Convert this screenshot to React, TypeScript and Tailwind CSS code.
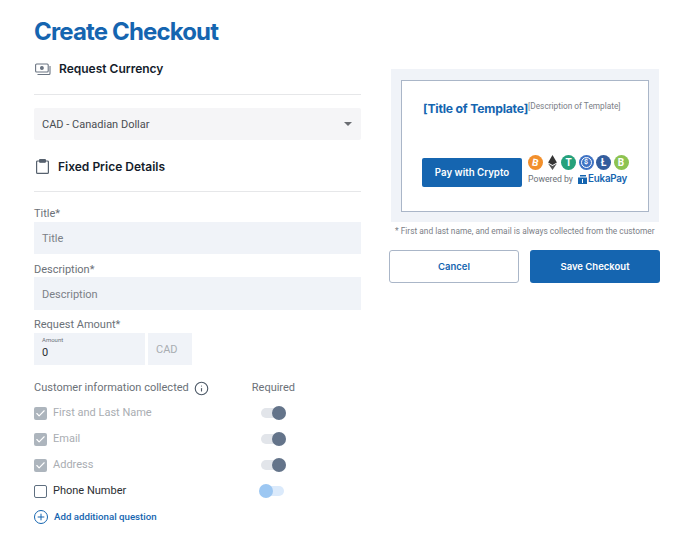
import { Check, Info, Plus } from 'lucide-react'

const heading = 'font-["Inter",sans-serif]'

function Coin({ color, children }: { color: string; children: React.ReactNode }) {
  return (
    <span className={`flex h-[15px] w-[15px] items-center justify-center rounded-full text-[10px] font-bold leading-none text-white ${color}`}>
      {children}
    </span>
  )
}

function InfoRow({ label, checked }: { label: string; checked: boolean }) {
  return (
    <div className="flex h-[26px] items-center">
      <span className={`flex h-[13px] w-[13px] items-center justify-center rounded-[2px] ${checked ? 'bg-[#adb5bd]' : 'border border-[#5f6f80] bg-white'}`}>
        {checked && <Check className="h-[11px] w-[11px] text-white" strokeWidth={2.5} />}
      </span>
      <span className={`ml-[6px] w-[208px] text-[11px] ${checked ? 'text-[#a9adb2]' : 'text-[#2b2f33]'}`}>{label}</span>
      {checked ? (
        <span className="relative h-[10px] w-[25px] rounded-full bg-[#e2e5ea]">
          <span className="absolute -top-[2px] right-0 h-[14px] w-[14px] rounded-full bg-[#64748a]" />
        </span>
      ) : (
        <span className="relative h-[10px] w-[23px] rounded-full bg-[#dbeafb]">
          <span className="absolute -top-[2px] -left-[2px] h-[14px] w-[14px] rounded-full bg-[#9cc7f2]" />
        </span>
      )}
    </div>
  )
}

export default function App() {
  return (
    <div className='flex h-[539px] w-[688px] items-start bg-white pl-[34px] font-["Roboto",sans-serif]'>
      <div className="w-[327px] pt-[16px]">
        <h1 className={`${heading} text-[24px] font-bold leading-[32px] tracking-[-0.85px] text-[#1565b0]`}>Create Checkout</h1>

        <div className="mt-[5px] flex h-[32px] items-center">
          <svg viewBox="0 0 16 13" className="ml-[1px] h-[13px] w-[16px] text-[#6b7582]" fill="none" stroke="currentColor" strokeWidth="1.1">
            <rect x="0.6" y="1" width="12.6" height="8" rx="1" />
            <circle cx="6.9" cy="5" r="1.4" fill="currentColor" />
            <path d="M15 3v7.5a1 1 0 0 1-1 1H2.5" />
          </svg>
          <span className={`${heading} ml-[8px] text-[12px] font-semibold text-[#141c2b]`}>Request Currency</span>
        </div>
        <div className="mt-[9px] h-px bg-[#e6e7e9]" />

        <div className="mt-[13px] flex h-[32px] items-center justify-between rounded-[2px] bg-[#f5f5f7] pl-[8px] pr-[9px]">
          <span className="pt-[2px] text-[11px] text-[#4a4d52]">CAD - Canadian Dollar</span>
          <span className="h-0 w-0 border-x-[4px] border-t-[4px] border-x-transparent border-t-[#6a6d72]" />
        </div>

        <div className="mt-[10px] flex h-[32px] items-center">
          <svg viewBox="0 0 13 15" className="ml-[2px] h-[15px] w-[13px] text-[#56616e]" fill="none" stroke="currentColor" strokeWidth="1.2">
            <path d="M3.5 2H1.6a1 1 0 0 0-1 1v10.4a1 1 0 0 0 1 1h9.8a1 1 0 0 0 1-1V3a1 1 0 0 0-1-1H9.5" />
            <rect x="3.6" y="0.6" width="5.8" height="2.6" rx="0.5" fill="currentColor" />
          </svg>
          <span className={`${heading} ml-[9px] pt-[1px] text-[12px] font-semibold text-[#141c2b]`}>Fixed Price Details</span>
        </div>
        <div className="mt-[9px] h-px bg-[#e6e7e9]" />

        <div className="mt-[14px] text-[11px] leading-[16px] text-[#6b7178]">Title*</div>
        <div className="flex h-[32px] items-center bg-[#f0f3f8] pl-[8px] pt-[2px] text-[11px] text-[#7b8087]">Title</div>

        <div className="mt-[8px] text-[11px] leading-[15px] text-[#6b7178]">Description*</div>
        <div className="flex h-[33px] items-center bg-[#f0f3f8] pl-[8px] pt-[3px] text-[11px] text-[#7b8087]">Description</div>

        <div className="mt-[7px] text-[11px] leading-[16px] text-[#6b7178]">Request Amount*</div>
        <div className="flex gap-[3px]">
          <div className="flex h-[32px] w-[111px] flex-col bg-[#f0f3f8] pl-[8px] pt-[3px]">
            <span className="text-[6px] leading-[8px] text-[#6b7178]">Amount</span>
            <span className="pt-[1px] text-[11px] leading-[15px] text-[#2b2f33]">0</span>
          </div>
          <div className="flex h-[32px] w-[44px] items-center bg-[#f0f3f8] pl-[8px] pt-[2px] text-[11px] text-[#a9adb2]">CAD</div>
        </div>

        <div className="mt-[15px] flex h-[16px] items-center text-[11px] text-[#6b7178]">
          <span>Customer information collected</span>
          <Info className="ml-[5px] h-[15px] w-[15px] text-[#4e5a68]" strokeWidth={1.8} />
          <span className="ml-[43px]">Required</span>
        </div>

        <div className="mt-[4px] flex flex-col">
          <InfoRow label="First and Last Name" checked />
          <InfoRow label="Email" checked />
          <InfoRow label="Address" checked />
          <InfoRow label="Phone Number" checked={false} />
        </div>

        <div className="mt-[6px] flex h-[14px] items-center">
          <span className="flex h-[14px] w-[14px] items-center justify-center rounded-full border-[1.4px] border-[#1565b0]">
            <Plus className="h-[10px] w-[10px] text-[#1565b0]" strokeWidth={2.4} />
          </span>
          <span className="ml-[6px] text-[9.7px] font-medium text-[#1565b0]">Add additional question</span>
        </div>
      </div>

      <div className="ml-[28px] mt-[69px] w-[271px]">
        <div className="ml-[2px] w-[268px] bg-[#f0f3f8] px-[10px] pb-[10px] pt-[11px]">
          <div className="h-[132px] border border-[#aab6c8] bg-white pl-[20px] pt-[18px]">
            <div className="flex items-start">
              <span className={`${heading} ml-[1px] text-[12.2px] font-bold leading-[20px] tracking-[-0.2px] text-[#1565b0]`}>[Title of Template]</span>
              <span className="mt-[1px] text-[8.3px] leading-[12px] text-[#7b8087]">[Description of Template]</span>
            </div>
            <div className="mt-[36px] flex items-start">
              <div className={`${heading} mt-[3px] flex h-[29px] w-[100px] items-center justify-center rounded-[2px] bg-[#1565b0] pt-[2px] text-[9.7px] font-semibold text-white`}>
                Pay with Crypto
              </div>
              <div className="ml-[6px]">
                <div className="flex gap-[2.5px]">
                  <Coin color="bg-[#f28f2b]">
                    <span className="rotate-12">B</span>
                  </Coin>
                  <svg viewBox="0 0 10 15" className="h-[15px] w-[13px]">
                    <path d="M5 0 9.4 7.4 5 10 .6 7.4z" fill="#343434" />
                    <path d="M5 11 9.4 8.4 5 15 .6 8.4z" fill="#555" />
                  </svg>
                  <Coin color="bg-[#26a17b]">T</Coin>
                  <Coin color="bg-[#3f73c4]">
                    <span className="flex h-[11px] w-[11px] items-center justify-center rounded-full border border-white text-[7px]">$</span>
                  </Coin>
                  <Coin color="bg-[#345d9d]">Ł</Coin>
                  <Coin color="bg-[#8dc351]">B</Coin>
                </div>
                <div className="mt-[2px] flex items-center whitespace-nowrap">
                  <span className="text-[8.7px] text-[#6b7178]">Powered by</span>
                  <svg viewBox="0 0 9 9" className="ml-[5px] h-[9px] w-[9px]">
                    <path d="M0 2.5h9V9H0z" fill="#1565b0" />
                    <path d="M2 0h6v1.5H2z" fill="#1565b0" />
                    <path d="M4 4h1v4H4z" fill="#fff" />
                  </svg>
                  <span className={`${heading} ml-[1px] text-[9.8px] font-semibold tracking-[-0.2px] text-[#1565b0]`}>EukaPay</span>
                </div>
              </div>
            </div>
          </div>
        </div>

        <p className="mt-[2px] whitespace-nowrap pl-[6px] text-[8.35px] leading-[14px] text-[#7b8087]">* First and last name, and email is always collected from the customer</p>

        <div className="mt-[12px] flex gap-[11px]">
          <button className={`${heading} h-[33px] w-[130px] rounded-[3px] border border-[#aab6c8] bg-white pt-[1px] text-[9.5px] font-semibold text-[#1565b0]`}>Cancel</button>
          <button className={`${heading} h-[33px] w-[130px] rounded-[3px] bg-[#1565b0] pt-[1px] text-[9.5px] font-semibold text-white`}>Save Checkout</button>
        </div>
      </div>
    </div>
  )
}
